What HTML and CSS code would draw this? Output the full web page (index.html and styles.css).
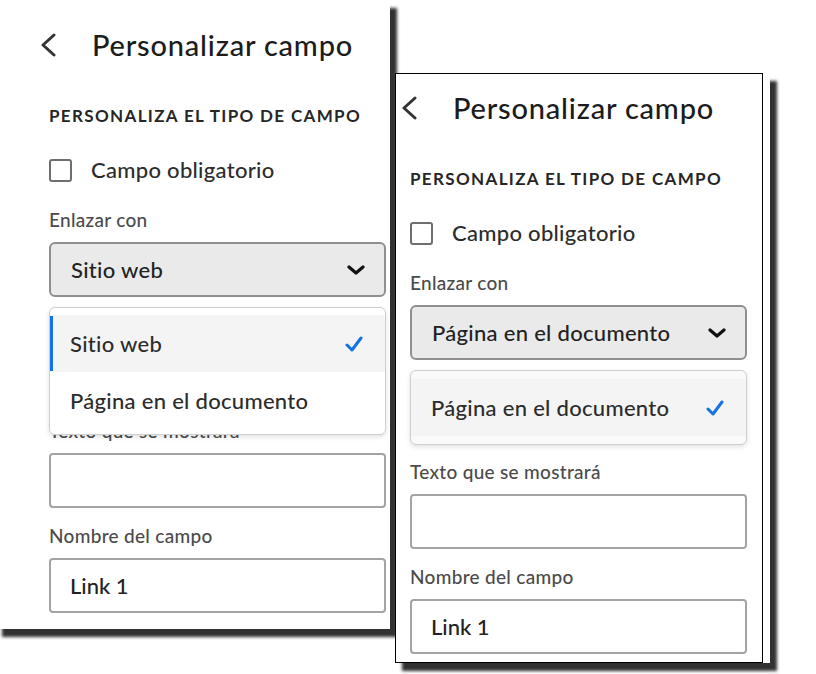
FILE: index.html
```html
<!DOCTYPE html>
<html lang="es">
<head>
<meta charset="utf-8">
<title>Personalizar campo</title>
<link rel="stylesheet" href="styles.css">
</head>
<body>
<div class="desk">

  <section class="win win--left">
    <div class="panel panel--left">
      <div class="header">
        <svg class="back" viewBox="0 0 17 24" aria-hidden="true"><polyline points="14,2 3,12 14,22"/></svg>
        <h1 class="title">Personalizar campo</h1>
      </div>
      <h2 class="section">PERSONALIZA EL TIPO DE CAMPO</h2>
      <label class="check-row"><span class="checkbox"></span><span class="check-label">Campo obligatorio</span></label>
      <div class="label label--first">Enlazar con</div>
      <div class="picker-wrap picker-wrap--web">
        <div class="picker">
          <span class="picker-value">Sitio web</span>
          <svg class="caret" viewBox="0 0 18 10" aria-hidden="true"><polyline points="2,2 9,8 16,2"/></svg>
        </div>
        <div class="popover popover--two">
          <div class="item item--selected item--focus">
            <span>Sitio web</span>
            <svg class="tick" viewBox="0 0 18 16" aria-hidden="true"><polyline points="2,9 7,14 16,2"/></svg>
          </div>
          <div class="item"><span>Página en el documento</span></div>
        </div>
      </div>
      <div class="label">Texto que se mostrará</div>
      <div class="input"></div>
      <div class="label label--gap">Nombre del campo</div>
      <div class="input"><span class="input-value">Link 1</span></div>
    </div>
  </section>

  <section class="win win--right">
    <div class="frame">
      <div class="panel panel--right">
        <div class="header">
          <svg class="back" viewBox="0 0 17 24" aria-hidden="true"><polyline points="14,2 3,12 14,22"/></svg>
          <h1 class="title">Personalizar campo</h1>
        </div>
        <h2 class="section">PERSONALIZA EL TIPO DE CAMPO</h2>
        <label class="check-row"><span class="checkbox"></span><span class="check-label">Campo obligatorio</span></label>
        <div class="label label--first">Enlazar con</div>
        <div class="picker-wrap picker-wrap--page">
          <div class="picker">
            <span class="picker-value">Página en el documento</span>
            <svg class="caret" viewBox="0 0 18 10" aria-hidden="true"><polyline points="2,2 9,8 16,2"/></svg>
          </div>
          <div class="popover popover--one">
            <div class="item item--selected">
              <span>Página en el documento</span>
              <svg class="tick" viewBox="0 0 18 16" aria-hidden="true"><polyline points="2,9 7,14 16,2"/></svg>
            </div>
          </div>
        </div>
        <div class="label">Texto que se mostrará</div>
        <div class="input"></div>
        <div class="label label--gap">Nombre del campo</div>
        <div class="input"><span class="input-value">Link 1</span></div>
      </div>
    </div>
  </section>

</div>
</body>
</html>
```

FILE: styles.css
```css
* { box-sizing: border-box; }

body {
  margin: 0;
  background: #ffffff;
  font-family: Lato, "Open Sans", "Noto Sans", sans-serif;
  font-weight: 500;
  color: #2c2c2c;
}

.desk {
  position: relative;
  width: 816px;
  height: 674px;
  overflow: hidden;
  background: #ffffff;
}

/* screenshot "windows" lying on the canvas */
.win {
  position: absolute;
  background: #ffffff;
  box-shadow: 7px 8px 3px rgba(20, 20, 20, 0.88);
}

.win--left {
  left: -5px;
  top: 0;
  width: 395px;
  height: 629px;
}

.win--right {
  left: 395px;
  top: 73px;
  width: 375px;
  height: 590px;
}

.frame {
  width: 368px;
  height: 590px;
  border: 1px solid #000000;
  background: #ffffff;
}

.panel {
  display: flex;
  flex-direction: column;
  width: 337px;
}

.panel--left {
  margin-left: 54px;
  padding-top: 28px;
}

.panel--right {
  margin-left: 14px;
  padding-top: 17px;
}

.header {
  display: flex;
  align-items: center;
  height: 34px;
  margin-left: -9px;
}

.back {
  width: 17px;
  height: 24px;
  flex: none;
  fill: none;
  stroke: #333333;
  stroke-width: 3;
  stroke-linecap: round;
  stroke-linejoin: round;
}

.title {
  margin: 0 0 0 35px;
  font-size: 29px;
  line-height: 34px;
  font-weight: 500;
  letter-spacing: 0.8px;
  color: #1c1c1c;
}

.section {
  margin: 44px 0 0;
  height: 20px;
  font-size: 17px;
  line-height: 20px;
  font-weight: 700;
  letter-spacing: 1.35px;
  color: #262626;
}

.check-row {
  display: flex;
  align-items: center;
  height: 26px;
  margin-top: 31px;
}

.checkbox {
  width: 23px;
  height: 23px;
  border: 2px solid #6e6e6e;
  border-radius: 3px;
  flex: none;
}

.check-label {
  margin-left: 19px;
  font-size: 22px;
  line-height: 26px;
  letter-spacing: 0.3px;
  color: #2c2c2c;
}

.label {
  height: 22px;
  font-size: 19px;
  line-height: 22px;
  letter-spacing: 0.3px;
  color: #4b4b4b;
}

.label--first { margin-top: 26px; }
.label--gap { margin-top: 17px; }

.picker-wrap {
  position: relative;
  margin-top: 11px;
}

.picker-wrap--web { margin-bottom: 123px; }
.picker-wrap--page { margin-bottom: 101px; }

.picker {
  display: flex;
  align-items: center;
  justify-content: space-between;
  height: 55px;
  padding: 0 19px 0 20px;
  background: #eaeaea;
  border: 2px solid #8f8f8f;
  border-radius: 6px;
}

.picker-value {
  font-size: 22px;
  line-height: 26px;
  letter-spacing: 0.3px;
  color: #222222;
}

.caret {
  width: 18px;
  height: 10px;
  fill: none;
  stroke: #111111;
  stroke-width: 3.2;
  stroke-linecap: round;
  stroke-linejoin: round;
}

.popover {
  position: absolute;
  left: 0;
  right: 0;
  top: calc(100% + 10px);
  background: #ffffff;
  border: 1px solid #cfcfcf;
  border-radius: 6px;
  box-shadow: 0 2px 5px rgba(0, 0, 0, 0.12);
  overflow: hidden;
}

.popover--two { padding: 7px 0 5px; }
.popover--one { padding: 8px 0; background: #fafafa; }

.item {
  position: relative;
  display: flex;
  align-items: center;
  justify-content: space-between;
  height: 57px;
  padding: 0 22px 0 20px;
  font-size: 22px;
  line-height: 26px;
  letter-spacing: 0.3px;
  color: #2c2c2c;
}

.item--selected { background: #f4f4f4; }

.item--focus::before {
  content: "";
  position: absolute;
  left: 0;
  top: 1px;
  bottom: 1px;
  width: 3px;
  background: #1473e6;
}

.tick {
  width: 18px;
  height: 16px;
  fill: none;
  stroke: #1473e6;
  stroke-width: 3;
  stroke-linecap: round;
  stroke-linejoin: round;
}

.input {
  display: flex;
  align-items: center;
  height: 55px;
  margin-top: 11px;
  padding: 0 19px;
  background: #ffffff;
  border: 2px solid #a3a3a3;
  border-radius: 4px;
}

.input-value {
  font-size: 22px;
  line-height: 26px;
  color: #222222;
}
```
